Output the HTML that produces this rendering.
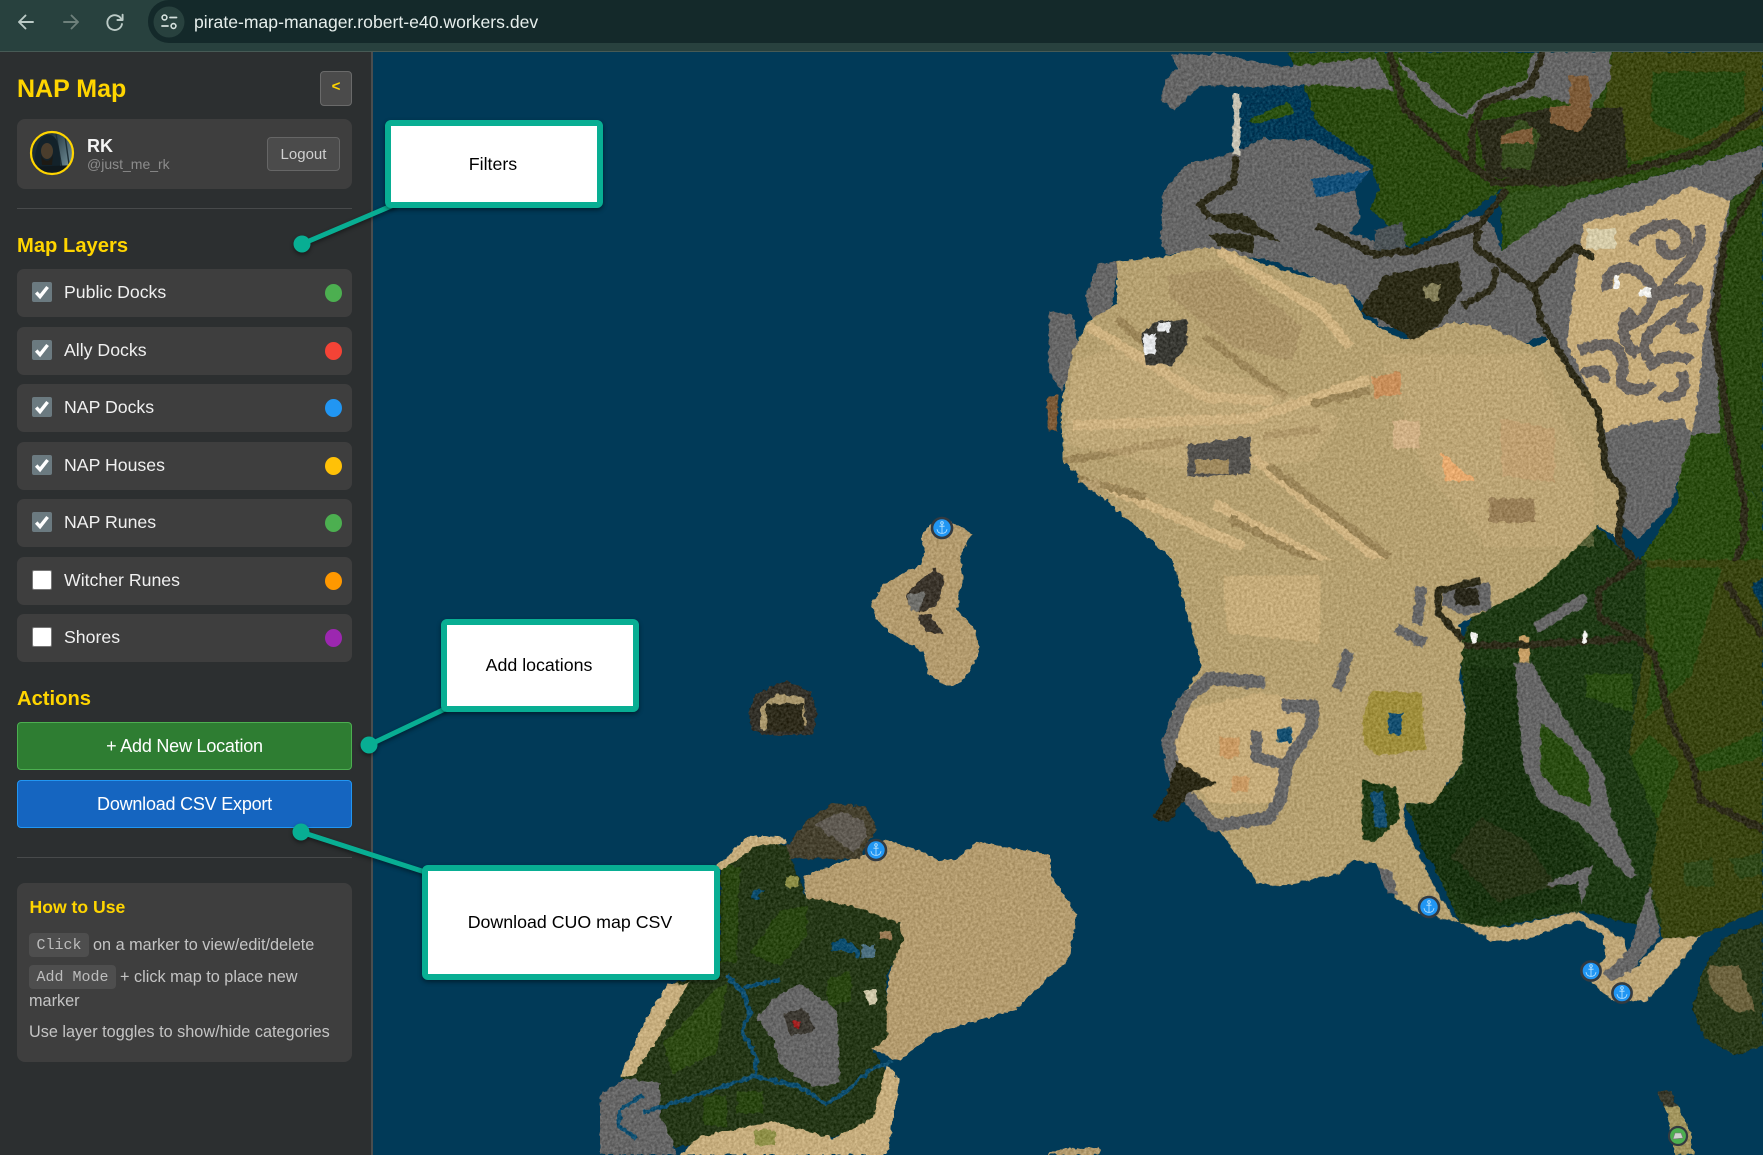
<!DOCTYPE html>
<html><head><meta charset="utf-8"><title>NAP Map</title>
<style>
*{box-sizing:border-box}
html,body{margin:0;padding:0;width:1763px;height:1155px;overflow:hidden;background:#013a58;font-family:"Liberation Sans",sans-serif}
.abs{position:absolute}
#tb{left:0;top:0;width:1763px;height:52px;background:#28413e;border-bottom:1px solid #475a55}
#pill{left:148px;top:0;width:1615px;height:43px;background:#14292a;border-radius:0 0 0 21px;border-top-left-radius:21px}
#url{left:194px;top:11px;font-size:17.6px;line-height:22px;color:#e6eeec;white-space:nowrap}
#side{left:0;top:52px;width:373px;height:1103px;background:#2c2f30;border-right:2px solid #4a4d4e}
.t{position:absolute;white-space:nowrap}
.y{color:#ffd500;font-weight:bold}
.row{position:absolute;left:17px;width:335px;height:48px;background:#3e3e3e;border-radius:7px}
.cb{position:absolute;left:15px;top:13px;width:20px;height:20px;border-radius:2px;background:#6b7a80}
.cb.off{background:#fff;border:1px solid #777}
.cb svg{position:absolute;left:0;top:0}
.lb{position:absolute;left:47px;top:12px;font-size:17.7px;line-height:22px;color:#f0f0f0;white-space:nowrap}
.dot{position:absolute;left:308px;top:15px;width:17px;height:18px;border-radius:50%}
.btn{position:absolute;left:17px;width:335px;height:48px;border-radius:4px;color:#fff;font-size:18px;line-height:46px;text-align:center;letter-spacing:-.22px}
kbd{position:absolute;background:#4e4e4e;border-radius:4px;font-family:"Liberation Mono",monospace;font-size:15px;color:#bdbdbd;height:24px;line-height:25px;text-align:center}
.h{position:absolute;font-size:16.25px;line-height:20px;color:#c4c4c4;white-space:nowrap}
.box{position:absolute;background:#fff;border:6px solid #08ae93;border-radius:6px;box-shadow:0 2px 5px rgba(0,0,0,.45);color:#000;font-size:17.8px;display:flex;align-items:center;justify-content:center;padding-right:2px}
</style></head><body>

<svg class="abs" style="left:0;top:0" width="1763" height="1155" viewBox="0 0 1763 1155">
<defs>
<filter id="tx" x="0" y="0" width="1763" height="1155" filterUnits="userSpaceOnUse" color-interpolation-filters="sRGB">
<feTurbulence type="fractalNoise" baseFrequency=".16" numOctaves="2" seed="4" result="n"/>
<feDisplacementMap in="SourceGraphic" in2="n" scale="6" xChannelSelector="R" yChannelSelector="G" result="d"/>
<feTurbulence type="fractalNoise" baseFrequency=".38" numOctaves="2" seed="9"/>
<feColorMatrix type="matrix" values="1 0 0 0 0  1 0 0 0 0  1 0 0 0 0  0 0 0 0 1" result="m"/>
<feComposite in="d" in2="m" operator="arithmetic" k1="0" k2="1" k3=".26" k4="-.13" result="r"/>
<feComposite in="r" in2="d" operator="in"/>
</filter>
<linearGradient id="avg" x1="0" y1="0" x2="1" y2=".6"><stop offset=".35" stop-color="#1b2c34"/><stop offset="1" stop-color="#6f8c96"/></linearGradient>
<g id="anc" fill="none" stroke="#bfe6ff" stroke-width=".8"><circle cx="0" cy="-5" r="1.3"/><path d="M0-3.6V5.4M-2.6-1.8H2.6M-5 1.2C-4.6 4 -2.6 5.4 0 5.4S4.6 4 5 1.2"/></g>
</defs>
<rect width="1763" height="1155" fill="#013a58"/>
<g filter="url(#tx)">

<!-- ZONE 3 : north -->
<g transform="translate(1000,40) scale(.4866,.357)">
<polygon fill="#2b4a10" points="620,110 650,230 760,340 780,420 760,470 840,580 970,480 1030,420 1030,590 1180,450 1568,295 1568,33 590,33"/>
<polygon fill="#3e4812" points="1260,33 1568,33 1568,240 1300,340 1240,200"/>
<polygon fill="#284a12" points="1340,90 1530,90 1530,200 1420,280 1340,230"/>
<polygon fill="#31501a" points="1020,430 1270,390 1130,490 1050,590"/>
<polygon fill="#2c2c1b" points="980,230 1130,190 1280,190 1290,370 1100,400 1000,380"/>
<polygon fill="#3f6a22" points="1030,270 1070,220 1110,260 1090,360 1030,360" opacity=".5"/>
<polygon fill="#666" points="350,40 460,40 580,75 770,50 810,140 640,125 560,135 490,130 410,130 360,195 330,170 340,110 365,80"/>
<polygon fill="#666" points="1100,33 1255,33 1255,110 1215,190 1120,160 1000,170 960,220 900,190 820,70 820,50 1060,130"/>
<polygon fill="#2b4a10" points="820,55 1090,33 1085,110 1000,150 950,210 880,130"/>
<polygon fill="#666" points="330,560 335,420 385,345 470,320 540,275 640,280 740,340 762,360 730,420 740,500 720,540 850,600 960,490 1000,500 1020,540 1030,590 1180,450 1568,295 1568,380 1500,450 1490,800 1500,1100 1420,1110 1380,1300 1310,1400 1240,1300 1240,1100 1120,830 1050,860 950,790 880,820 780,800 740,730 620,650 560,620 420,590 340,600"/>
<polygon fill="#2a4812" points="1500,450 1568,380 1568,1300 1530,1250 1480,1100 1470,800"/>
<polygon fill="#2b4c11" points="1400,1110 1480,1100 1530,1250 1568,1300 1568,1568 1290,1568 1320,1450 1390,1300"/>
<polygon fill="#1f3a15" points="1050,1568 1225,1360 1300,1460 1310,1568"/>
<polygon fill="#666" points="175,720 200,625 245,620 225,780 190,790"/>
<polygon fill="#666" points="100,760 150,770 165,880 125,985 100,930"/>
<polygon fill="#b5a070" points="240,620 340,605 420,580 470,590 530,620 620,660 710,690 750,780 830,840 930,790 1000,800 1100,860 1130,840 1170,920 1230,1040 1245,1200 1280,1260 1270,1400 1230,1360 1100,1540 1040,1568 400,1568 350,1450 250,1330 130,1180 125,1030 150,870 180,790 240,740"/>
<polygon fill="#c6ac7a" points="1200,510 1310,480 1420,410 1500,450 1470,620 1450,800 1430,1050 1420,1100 1400,1060 1270,1080 1245,1100 1230,1040 1165,850 1180,700 1190,600"/>
<polygon fill="#666" points="1270,1090 1400,1060 1420,1110 1380,1300 1310,1400 1270,1340 1330,1250 1260,1120"/>
<!-- light dune streaks -->
<g fill="none" stroke="#cfb381">
<path vector-effect="non-scaling-stroke" stroke-width="10" d="M180,800 L420,1000 L560,1010 M450,590 L660,760 L720,860 M150,1080 L520,1060 L760,950 M520,1170 L820,1500 M440,1300 L780,1540 M220,1250 L500,1420"/>
<path vector-effect="non-scaling-stroke" stroke-width="8" stroke="#9c8659" d="M420,830 L590,1000 M240,780 L340,900 M550,1190 L800,1450 M130,1180 L380,1120 M540,1110 L660,1090 M160,1230 L300,1280 M640,1020 L760,980 M470,1340 L700,1500"/>
</g>
<polygon fill="#cdb282" points="240,860 520,950 700,1060 640,1180 400,1210 130,1130 150,900" opacity=".4"/>
<polygon fill="#cdb282" points="780,880 1100,880 1220,1250 1220,1420 1000,1420 870,1200" opacity=".3"/>
<polygon fill="#aa9367" points="345,660 470,640 620,800 600,900 480,860 350,720"/>
<!-- buildings -->
<polygon fill="#3a3a34" points="325,785 385,785 385,850 355,910 300,910 290,825"/>
<polygon fill="#e4e6e8" points="325,790 350,790 350,818 325,818"/><polygon fill="#e4e6e8" points="295,825 320,825 320,880 295,880"/>
<polygon fill="#55534f" points="385,1135 515,1110 515,1215 385,1225"/>
<polygon fill="#a08a5e" points="400,1175 470,1175 470,1215 400,1215"/>
<polygon fill="#c98f5a" points="765,945 825,930 825,990 770,1005"/>
<polygon fill="#e7aa6e" points="905,1150 975,1235 915,1235"/>
<polygon fill="#8a6f4a" points="1005,1285 1100,1285 1100,1350 1005,1350" opacity=".7"/>
<polygon fill="#c09f70" points="1030,1060 1140,1090 1140,1240 1030,1220" opacity=".8"/>
<polygon fill="#d0b085" points="808,1065 862,1065 862,1145 808,1145"/>
<polygon fill="#7d5b38" points="1170,100 1210,100 1215,210 1190,260 1130,230 1130,185 1170,185"/>
<polygon fill="#7d5b38" points="1030,265 1095,245 1095,290 1030,290"/>
<polygon fill="#4c5356" points="770,530 830,510 835,590 770,590"/>
<polygon fill="#7d5b38" points="98,995 118,995 118,1095 98,1095"/>
<polygon fill="#2d2c18" points="740,760 790,660 940,620 950,700 900,800 850,840 790,790"/>
<polygon fill="#85805a" points="870,690 905,680 900,730 875,725"/>
<polygon fill="#2d2c18" points="420,490 500,485 575,565 470,525"/>
<polygon fill="#2d2c18" points="430,545 520,545 520,600 450,575"/>
<polygon fill="#013a58" points="620,135 650,230 760,340 760,360 640,280 540,270 495,310 495,160 560,125"/>
<polygon fill="#2c5212" points="510,225 590,175 605,205 530,235"/>
<polygon fill="#13507a" points="640,390 760,365 730,420 650,440"/>
<polygon fill="#c7c3b4" points="478,150 494,150 494,320 478,320"/>
<!-- swirl -->
<g fill="none" stroke="#6a6561">
<path vector-effect="non-scaling-stroke" stroke-width="11" d="M1300,570 C1320,510 1420,490 1410,570 C1400,620 1350,610 1360,560 M1440,520 C1440,620 1380,660 1350,720 C1420,680 1470,690 1400,760 C1340,800 1300,860 1340,900 M1250,700 C1230,640 1300,620 1320,660 C1370,720 1320,800 1280,800 M1190,870 C1240,850 1280,830 1280,930 C1260,980 1320,1000 1340,960 M1200,940 C1220,910 1250,930 1240,960 M1400,930 C1420,980 1380,1020 1360,990 M1430,720 C1380,780 1400,830 1430,800 M1300,760 C1260,800 1290,860 1310,880 M1330,920 C1360,880 1400,880 1420,900"/>
</g>
<polygon fill="#d5cba8" points="1205,530 1265,525 1265,585 1205,585"/>
<polygon fill="#f0f0ec" points="1262,660 1272,660 1272,695 1262,695"/><polygon fill="#f0f0ec" points="1315,695 1340,695 1340,720 1315,720"/>
<!-- rivers -->
<g fill="none" stroke="#2e2c1a" stroke-linejoin="round">
<path vector-effect="non-scaling-stroke" stroke-width="7" d="M485,325 L480,400 L410,460 L430,495 M985,530 L975,580 L1040,640 L1100,700 L1110,780 L1170,920 L1230,1040 L1245,1200 L1280,1260 L1270,1400 L1320,1490 L1290,1568 M1100,690 L1180,580 L1220,610 M1020,640 L1010,700 L950,745 M800,33 L830,190 L950,340 L1020,400 L1150,400 L1280,370 L1450,310 L1568,200 M1115,33 L1090,130 L990,180 L970,260 L970,350 L1020,400 M1040,420 L985,520 L850,590 L770,600 L650,520 M1568,370 L1490,560 L1465,800 L1500,1100 L1530,1300 L1530,1400 L1490,1520 L1520,1568"/>
</g>
</g>

<!-- ZONE 4 : south-east -->
<g transform="translate(1100,560) scale(.4228,.3795)">
<polygon fill="#3a4512" points="1180,0 1568,0 1568,920 1420,990 1330,1000 1300,860 1240,690 1250,500 1290,210"/>
<polygon fill="#2a4b12" points="1230,20 1470,20 1400,300 1290,420 1310,210"/>
<polygon fill="#2a4c12" points="1200,590 1300,460 1370,530 1320,680 1240,660"/>
<polygon fill="#2a4c12" points="1390,530 1568,450 1568,520 1420,560"/>
<polygon fill="#30491a" points="1380,800 1450,785 1450,860 1385,860"/>
<polygon fill="#30491a" points="1490,790 1568,770 1568,830 1510,840"/>
<polygon fill="#1f3a15" points="850,230 880,150 1040,60 1090,0 1290,0 1290,210 1250,500 1320,700 1300,860 1330,960 1270,960 1130,925 930,970 850,955 720,640 790,640 855,540 865,420"/>
<polygon fill="#1a3311" points="880,280 1000,290 1010,560 1110,690 1170,800 1130,900 880,950 760,760 740,660 860,560"/>
<polygon fill="#35351e" points="900,680 1010,740 1080,860 940,900 830,780" opacity=".5"/>
<polygon fill="#2a4c12" points="1150,300 1260,300 1260,400 1150,360"/>
<polygon fill="#b5a070" points="170,0 1070,0 1040,60 850,170 860,230 850,300 865,420 855,540 820,590 790,640 720,640 720,700 760,790 810,900 850,955 750,930 700,890 650,800 600,790 560,830 420,860 370,850 300,740 240,660 190,600 150,500 170,400 240,280 200,120"/>
<polygon fill="#c6ac7a" points="290,40 520,40 520,220 300,190"/>
<polygon fill="#c6ac7a" points="180,400 380,350 500,370 430,640 260,640 170,520"/>
<polygon fill="#bda576" points="850,955 930,1005 1010,1000 1130,950 1190,990 1195,1050 1150,1100 1210,1160 1290,1165 1340,1110 1420,990 1330,1000 1260,1080 1240,1000 1130,925 950,970"/>
<polygon fill="#666" points="1190,1090 1250,1030 1270,960 1300,860 1325,990 1260,1080 1210,1110"/>
<polygon fill="#666" points="655,810 690,820 705,880 680,880"/>
<polygon fill="#666" points="980,270 1020,270 1100,420 1190,560 1210,680 1270,830 1250,840 1130,690 1040,640 1000,540"/>
<polygon fill="#2a4c12" points="1045,430 1110,490 1155,560 1160,650 1090,620 1040,560"/>
<polygon fill="#666" points="1060,850 1150,810 1165,805 1140,910 1130,850 1060,860"/>
<g fill="none" stroke="#666" stroke-linejoin="round">
<path vector-effect="non-scaling-stroke" stroke-width="13" d="M390,322 L260,312 L200,370 L160,480 L180,590 L270,700 L400,680 L430,620 L440,540 L500,440 L505,385 L430,385"/>
<path vector-effect="non-scaling-stroke" stroke-width="11" d="M370,450 L370,520 L440,540 M590,240 L560,340 M700,180 L770,220 M760,70 L750,170 M1150,100 L1030,180"/>
</g>
<polygon fill="#9f8e3c" points="640,345 760,350 770,500 660,515 625,490 620,430"/>
<polygon fill="#154f70" points="682,405 715,405 715,460 682,460"/>
<polygon fill="#154f70" points="420,445 455,445 455,480 420,480"/>
<polygon fill="#c99a63" points="282,468 330,468 330,520 282,520"/><polygon fill="#c99a63" points="312,570 352,570 352,610 312,610"/>
<polygon fill="#2c2a17" points="180,530 275,590 210,610 165,690 125,680 160,610"/>
<polygon fill="#1f3a15" points="620,580 700,600 710,680 650,745 620,730"/>
<polygon fill="#154f70" points="642,612 670,612 680,705 650,705"/>
<polygon fill="#c79f66" points="992,200 1015,200 1015,270 992,270"/>
<polygon fill="#666" points="810,70 920,60 925,130 860,145 810,120"/>
<polygon fill="#2a281b" points="840,75 895,75 895,120 840,120"/>
<g fill="none" stroke="#2e2c1a" stroke-linejoin="round">
<path vector-effect="non-scaling-stroke" stroke-width="7" d="M860,225 L1000,225 L1270,205 L1310,250 L1350,430 L1400,530 L1420,630 L1568,710 M860,210 L800,140 L800,80 L900,55 M1270,205 L1180,150 L1180,80 L1280,0 M1480,60 L1568,200"/>
</g>
<polygon fill="#f0f0ec" points="878,193 890,193 890,220 878,220"/><polygon fill="#f0f0ec" points="1141,190 1152,190 1152,218 1141,218"/>
<polygon fill="#013a58" points="1568,45 1540,70 1568,130"/>
<polygon fill="#2b3b1a" points="1400,1180 1430,1070 1480,990 1568,955 1568,1280 1500,1305 1430,1260"/>
<polygon fill="#9a7f58" points="1440,1070 1510,1070 1550,1190 1500,1190 1440,1120" opacity=".6"/>
<polygon fill="#3a3a2c" points="1315,1400 1350,1400 1365,1440 1335,1440"/>
<polygon fill="#a3965f" points="1335,1440 1365,1440 1395,1500 1405,1568 1360,1568 1345,1480"/>
</g>

<!-- ZONE 5 : islands -->
<g transform="translate(600,480) scale(.3333,.4305)">
<polygon fill="#b39b6e" points="965,130 1000,95 1060,100 1115,125 1080,180 1090,230 1070,300 1130,350 1135,410 1090,465 1040,480 985,450 970,400 890,365 830,325 815,290 840,250 960,195 975,170"/>
<polygon fill="#3b352c" points="965,230 1005,205 1035,225 1010,290 960,310 925,280 920,265"/>
<polygon fill="#70706c" points="925,265 975,260 960,305 930,305"/>
<polygon fill="#3b352c" points="950,315 985,310 1030,355 980,355"/>
<polygon fill="#34322a" points="445,540 470,495 560,465 630,490 650,540 640,590 500,595 455,580"/>
<polygon fill="#a9976c" points="480,530 530,495 610,505 620,570 480,580"/>
<polygon fill="#2f2c1c" points="500,520 610,520 610,585 500,585"/>
<polygon fill="#b39b6e" points="820,860 860,835 960,860 1020,885 1070,880 1130,840 1350,870 1355,920 1430,1010 1410,1110 1250,1230 1000,1285 900,1350 810,1320 860,1200 880,1100 900,1030 620,980 610,920"/>
<polygon fill="#263818" points="360,890 470,840 560,850 620,970 760,990 900,1030 910,1070 860,1150 860,1300 815,1320 840,1350 880,1400 800,1510 600,1540 400,1530 220,1550 60,1385 130,1290 220,1170 350,1140 400,1000"/>
<polygon fill="#2e4a14" points="190,1310 350,1180 380,1170 350,1330 220,1380"/>
<polygon fill="#2a4612" points="450,1100 540,1000 620,990 620,1060 540,1130"/>
<polygon fill="#2a4612" points="680,1160 750,1140 755,1210 680,1225"/>
<polygon fill="#2a4612" points="360,890 420,900 410,1120 360,1120"/>
<polygon fill="#2a4612" points="310,1430 380,1430 380,1500 310,1500"/><polygon fill="#2a4612" points="410,1420 490,1420 490,1470 410,1470"/>
<polygon fill="#c6ad7d" points="350,895 450,825 560,830 560,845 470,850 365,905"/>
<polygon fill="#c6ad7d" points="60,1385 120,1280 200,1170 265,1170 170,1300 100,1385"/>
<polygon fill="#c6ad7d" points="240,1568 300,1525 520,1490 700,1530 820,1480 860,1360 900,1390 890,1440 860,1568"/>
<polygon fill="#46412f" points="560,850 620,790 700,750 800,760 830,810 780,880 640,880 570,880"/>
<polygon fill="#6b6762" points="640,800 720,770 790,790 800,830 760,865 700,830" opacity=".7"/>
<polygon fill="#666" points="0,1430 70,1390 180,1400 180,1480 220,1540 230,1568 0,1568"/>
<polygon fill="#666" points="530,1200 600,1170 710,1230 720,1400 640,1410 540,1360 520,1300 470,1250"/>
<polygon fill="#3d3a33" points="550,1240 610,1225 650,1280 570,1290"/>
<polygon fill="#a22020" points="575,1258 605,1258 590,1275"/>
<polygon fill="#4c6f7f" points="785,1080 825,1080 825,1110 785,1110"/>
<polygon fill="#d0c8aa" points="795,1185 828,1185 828,1218 805,1218"/>
<polygon fill="#9a7b56" points="838,1048 875,1048 875,1068 838,1068"/>
<polygon fill="#8f9048" points="555,922 595,922 595,945 555,945"/>
<polygon fill="#8f9048" points="465,1510 525,1510 525,1545 465,1545"/>
<g fill="none" stroke="#0f4f70" stroke-linejoin="round">
<path vector-effect="non-scaling-stroke" stroke-width="4" d="M380,1150 L430,1190 L450,1240 L425,1280 L470,1340 L465,1385 L600,1410 L680,1450 L740,1420 L810,1370 L880,1350 M465,1385 L210,1450 L130,1470 M430,1180 L540,1160 M60,1460 L130,1430 M60,1460 L55,1500 L110,1530"/>
</g>
<polygon fill="#0f4f70" points="695,1075 730,1065 780,1090 780,1110 740,1095 695,1095"/>
<polygon fill="#0f4f70" points="455,955 490,950 470,975 455,975"/>
<polygon fill="#b39b6e" points="1340,1568 1380,1555 1500,1550 1500,1568"/>
<polygon fill="#b39b6e" points="1435,0 1500,0 1500,40"/>
</g>
</g>

<!-- markers -->
<g stroke="#333a40" stroke-width="2.6" fill="#2196f3">
<circle cx="942" cy="528" r="10"/><circle cx="876" cy="850" r="10"/><circle cx="1429" cy="907" r="10"/><circle cx="1591" cy="971" r="9.6"/><circle cx="1622" cy="993" r="9.6"/>
</g>
<use href="#anc" x="942" y="528"/><use href="#anc" x="876" y="850"/><use href="#anc" x="1429" y="907"/><use href="#anc" x="1591" y="971"/><use href="#anc" x="1622" y="993"/>
<circle cx="1678" cy="1136" r="9" fill="#4caf50" stroke="#333a40" stroke-width="2.2"/>
<path d="M1673 1139l2-6h6l2 5z" fill="#cfd2cf" stroke="#777" stroke-width=".6"/>
</svg>

<!-- toolbar -->
<div class="abs" id="tb"></div>
<div class="abs" id="pill"></div>
<svg class="abs" style="left:0;top:0" width="200" height="44" viewBox="0 0 200 44" fill="none" stroke-linecap="round" stroke-linejoin="round">
<path d="M33 22H19M25.5 15.5L19 22l6.5 6.5" stroke="#bccbc7" stroke-width="1.9"/>
<path d="M64 22H78M71.5 15.5L78 22l-6.5 6.5" stroke="#6e807b" stroke-width="1.9"/>
<path d="M121.4 19.4A7.4 7.4 0 1 0 122 24" stroke="#bccbc7" stroke-width="1.9"/><path d="M122.6 14.7V20H117.4" stroke="#bccbc7" stroke-width="1.9"/>
<circle cx="169" cy="22" r="15.5" fill="#28413e"/>
<circle cx="164.5" cy="17.5" r="2.4" stroke="#d5e0dd" stroke-width="1.6"/><path d="M170 17.5h6.5M162 26h6" stroke="#d5e0dd" stroke-width="1.8"/><circle cx="173.5" cy="26" r="2.4" stroke="#d5e0dd" stroke-width="1.6"/>
</svg>
<div class="abs" id="url">pirate-map-manager.robert-e40.workers.dev</div>

<!-- sidebar -->
<div class="abs" id="side"></div>
<div class="t y" style="left:17px;top:74px;font-size:25px;line-height:30px">NAP Map</div>
<div class="abs" style="left:320px;top:71px;width:32px;height:35px;background:#4b4b4b;border:1px solid #6a6a6a;border-radius:4px;color:#ffd500;font-weight:bold;font-size:15px;line-height:30px;text-align:center">&lt;</div>

<div class="abs" style="left:17px;top:119px;width:335px;height:70px;background:#3e3e3e;border-radius:8px"></div>
<svg class="abs" style="left:29px;top:130px" width="46" height="46" viewBox="0 0 46 46">
<clipPath id="av"><circle cx="23" cy="23" r="21"/></clipPath>
<g clip-path="url(#av)"><rect width="46" height="46" fill="url(#avg)"/>
<path d="M27 4L33 38M36 6L40 34" stroke="#1e3038" stroke-width="1.4"/>
<path d="M5 44C5 18 10 5 20 5S31 20 32 46z" fill="#13222a"/>
<ellipse cx="18" cy="21" rx="6" ry="8" fill="#4a3d2c"/><path d="M12 24c2 9 10 9 12 0l-1 11h-10z" fill="#1d1a14"/>
<path d="M0 37L46 35V46H0z" fill="#10191d"/></g>
<circle cx="23" cy="23" r="21" fill="none" stroke="#ffd500" stroke-width="2.2"/>
</svg>
<div class="t" style="left:87px;top:135px;font-size:18px;line-height:22px;font-weight:bold;color:#f4f4f4">RK</div>
<div class="t" style="left:87px;top:155px;font-size:14px;line-height:18px;color:#8c8c8c">@just_me_rk</div>
<div class="abs" style="left:267px;top:137px;width:73px;height:34px;background:#4b4b4b;border:1px solid #666;border-radius:4px;color:#cfcfcf;font-size:15px;line-height:33px;text-align:center">Logout</div>

<div class="abs" style="left:17px;top:208px;width:335px;height:1px;background:#484a4b"></div>
<div class="t y" style="left:17px;top:233px;font-size:20.2px;line-height:26px">Map Layers</div>

<div class="row" style="top:269px"><div class="cb"><svg width="20" height="20" viewBox="0 0 20 20"><path d="M4.2 10.6l3.8 4L15.6 5" fill="none" stroke="#fff" stroke-width="3.4"/></svg></div><div class="lb">Public Docks</div><div class="dot" style="background:#4caf50"></div></div>
<div class="row" style="top:327px"><div class="cb"><svg width="20" height="20" viewBox="0 0 20 20"><path d="M4.2 10.6l3.8 4L15.6 5" fill="none" stroke="#fff" stroke-width="3.4"/></svg></div><div class="lb">Ally Docks</div><div class="dot" style="background:#f44336"></div></div>
<div class="row" style="top:384px"><div class="cb"><svg width="20" height="20" viewBox="0 0 20 20"><path d="M4.2 10.6l3.8 4L15.6 5" fill="none" stroke="#fff" stroke-width="3.4"/></svg></div><div class="lb">NAP Docks</div><div class="dot" style="background:#2196f3"></div></div>
<div class="row" style="top:442px"><div class="cb"><svg width="20" height="20" viewBox="0 0 20 20"><path d="M4.2 10.6l3.8 4L15.6 5" fill="none" stroke="#fff" stroke-width="3.4"/></svg></div><div class="lb">NAP Houses</div><div class="dot" style="background:#ffc107"></div></div>
<div class="row" style="top:499px"><div class="cb"><svg width="20" height="20" viewBox="0 0 20 20"><path d="M4.2 10.6l3.8 4L15.6 5" fill="none" stroke="#fff" stroke-width="3.4"/></svg></div><div class="lb">NAP Runes</div><div class="dot" style="background:#4caf50"></div></div>
<div class="row" style="top:557px"><div class="cb off"></div><div class="lb">Witcher Runes</div><div class="dot" style="background:#ff9800"></div></div>
<div class="row" style="top:614px"><div class="cb off"></div><div class="lb">Shores</div><div class="dot" style="background:#9c27b0"></div></div>

<div class="t y" style="left:17px;top:686px;font-size:20.2px;line-height:26px">Actions</div>
<div class="btn" style="top:722px;background:#2e7d32;border:1px solid #4caf50">+ Add New Location</div>
<div class="btn" style="top:780px;background:#1565c0;border:1px solid #2196f3">Download CSV Export</div>
<div class="abs" style="left:17px;top:857px;width:335px;height:1px;background:#484a4b"></div>

<div class="abs" style="left:17px;top:883px;width:335px;height:179px;background:#3e3e3e;border-radius:8px"></div>
<div class="t y" style="left:29.5px;top:897px;font-size:17.6px;line-height:20px">How to Use</div>
<kbd style="left:29px;top:933px;width:60px">Click</kbd>
<div class="h" style="left:93px;top:935px">on a marker to view/edit/delete</div>
<kbd style="left:29px;top:965px;width:87px">Add Mode</kbd>
<div class="h" style="left:120px;top:967px">+ click map to place new</div>
<div class="h" style="left:29px;top:991px">marker</div>
<div class="h" style="left:29px;top:1022px">Use layer toggles to show/hide categories</div>

<!-- callouts -->
<svg class="abs" style="left:0;top:0;overflow:visible" width="1763" height="1155">
<g stroke="#08ae93" stroke-width="5" fill="#08ae93" style="filter:drop-shadow(0 2px 2px rgba(0,0,0,.45))">
<path d="M396 204L302 244"/><circle cx="302" cy="244" r="8.5" stroke="none"/>
<path d="M447 708L369 745"/><circle cx="369" cy="745" r="8.5" stroke="none"/>
<path d="M428 873L301 832"/><circle cx="301" cy="832" r="8.5" stroke="none"/>
</g>
</svg>
<div class="box" style="left:385px;top:120px;width:218px;height:88px">Filters</div>
<div class="box" style="left:441px;top:619px;width:198px;height:93px">Add locations</div>
<div class="box" style="left:422px;top:865px;width:298px;height:115px">Download CUO map CSV</div>
</body></html>
